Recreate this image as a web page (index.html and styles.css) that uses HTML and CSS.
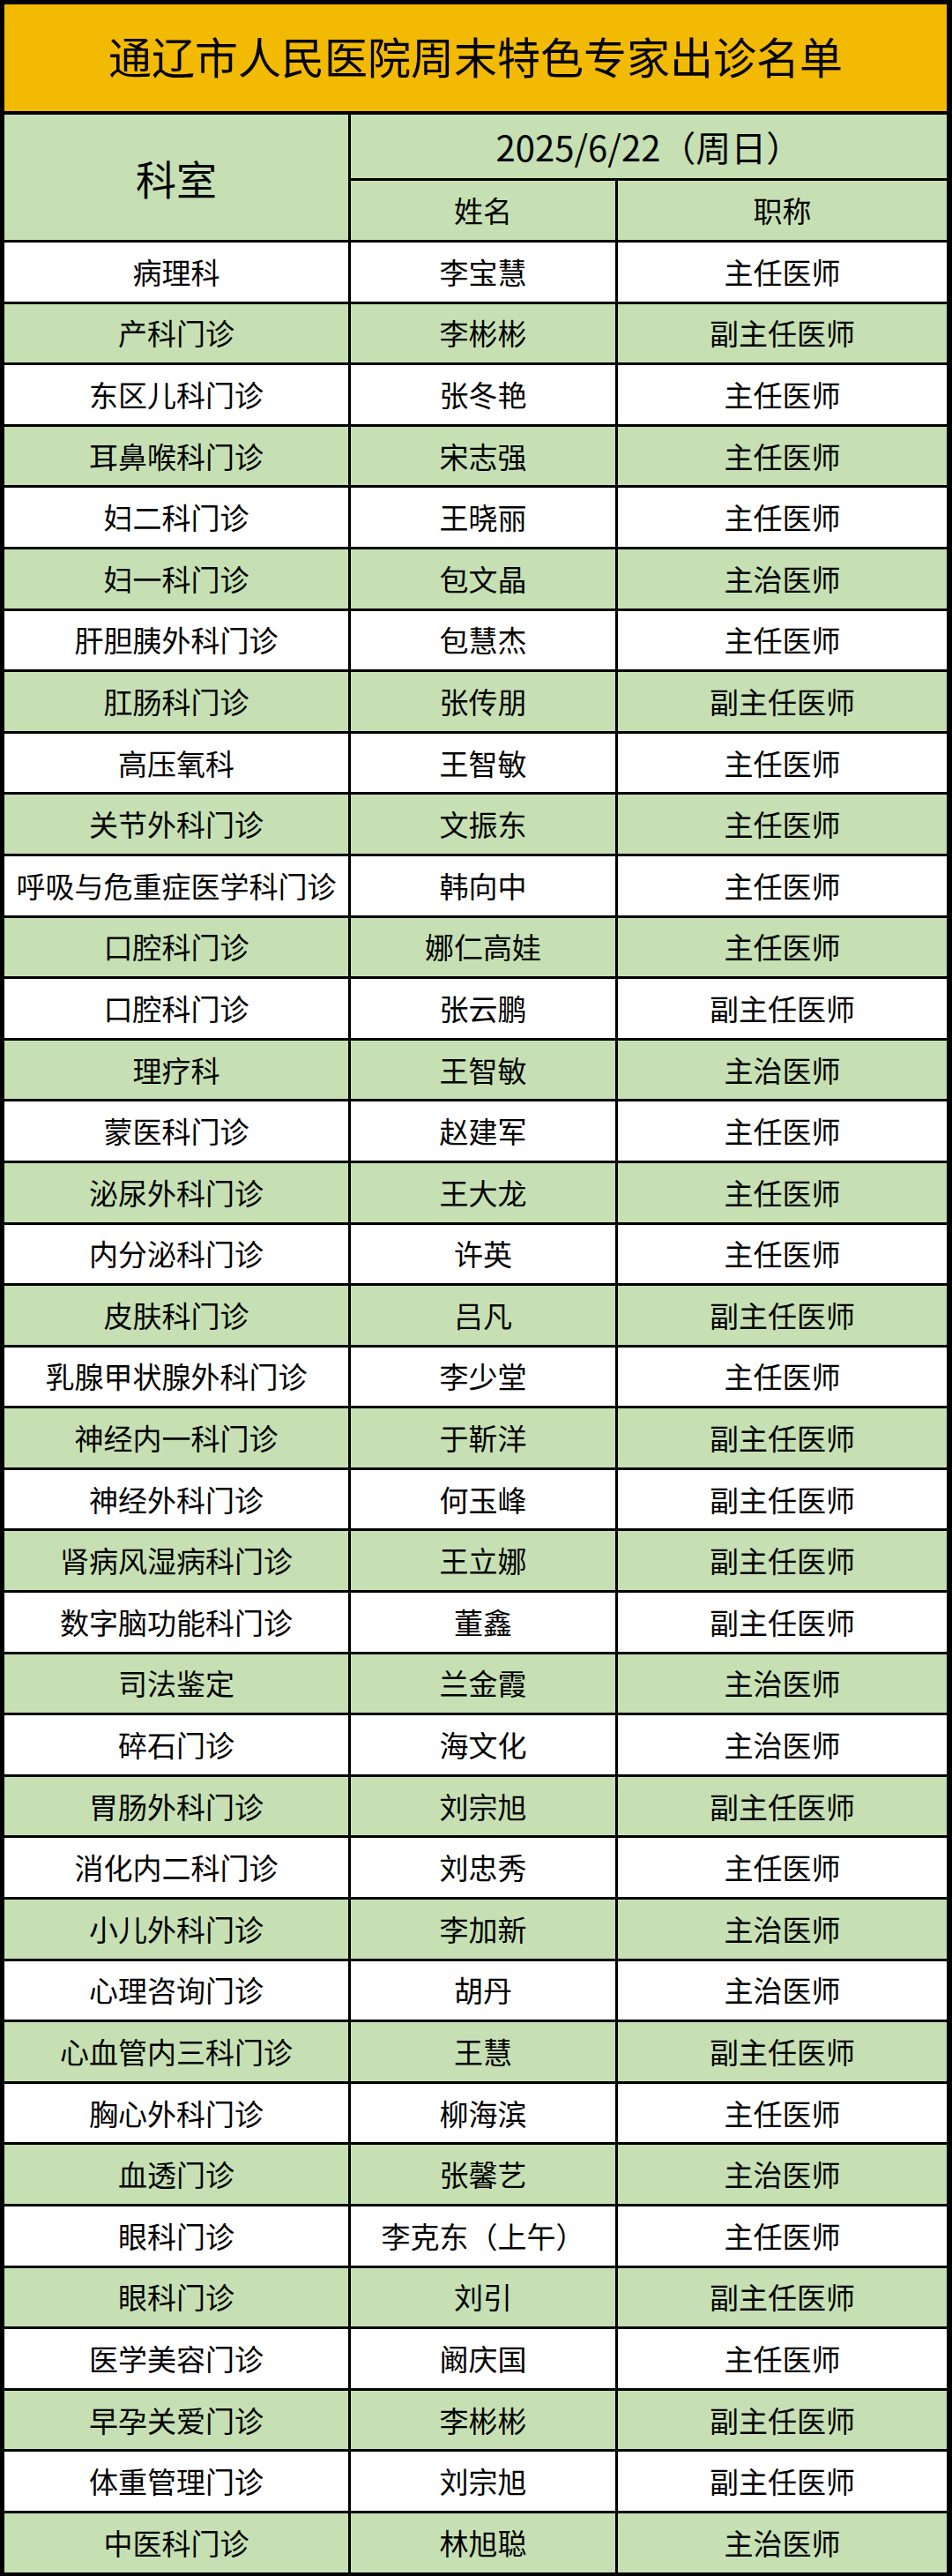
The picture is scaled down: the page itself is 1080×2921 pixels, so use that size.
FILE: index.html
```html
<!DOCTYPE html>
<html lang="zh-CN">
<head>
<meta charset="utf-8">
<title>通辽市人民医院周末特色专家出诊名单</title>
<link rel="stylesheet" href="styles.css">
</head>
<body>
<div class="sheet">
  <div class="title">通辽市人民医院周末特色专家出诊名单</div>
  <div class="grid">
    <div class="cell head dept">科室</div>
    <div class="cell head date">2025/6/22（周日）</div>
    <div class="cell head">姓名</div>
    <div class="cell head">职称</div>
    <div class="row w"><div class="cell">病理科</div><div class="cell">李宝慧</div><div class="cell">主任医师</div></div>
    <div class="row g"><div class="cell">产科门诊</div><div class="cell">李彬彬</div><div class="cell">副主任医师</div></div>
    <div class="row w"><div class="cell">东区儿科门诊</div><div class="cell">张冬艳</div><div class="cell">主任医师</div></div>
    <div class="row g"><div class="cell">耳鼻喉科门诊</div><div class="cell">宋志强</div><div class="cell">主任医师</div></div>
    <div class="row w"><div class="cell">妇二科门诊</div><div class="cell">王晓丽</div><div class="cell">主任医师</div></div>
    <div class="row g"><div class="cell">妇一科门诊</div><div class="cell">包文晶</div><div class="cell">主治医师</div></div>
    <div class="row w"><div class="cell">肝胆胰外科门诊</div><div class="cell">包慧杰</div><div class="cell">主任医师</div></div>
    <div class="row g"><div class="cell">肛肠科门诊</div><div class="cell">张传朋</div><div class="cell">副主任医师</div></div>
    <div class="row w"><div class="cell">高压氧科</div><div class="cell">王智敏</div><div class="cell">主任医师</div></div>
    <div class="row g"><div class="cell">关节外科门诊</div><div class="cell">文振东</div><div class="cell">主任医师</div></div>
    <div class="row w"><div class="cell">呼吸与危重症医学科门诊</div><div class="cell">韩向中</div><div class="cell">主任医师</div></div>
    <div class="row g"><div class="cell">口腔科门诊</div><div class="cell">娜仁高娃</div><div class="cell">主任医师</div></div>
    <div class="row w"><div class="cell">口腔科门诊</div><div class="cell">张云鹏</div><div class="cell">副主任医师</div></div>
    <div class="row g"><div class="cell">理疗科</div><div class="cell">王智敏</div><div class="cell">主治医师</div></div>
    <div class="row w"><div class="cell">蒙医科门诊</div><div class="cell">赵建军</div><div class="cell">主任医师</div></div>
    <div class="row g"><div class="cell">泌尿外科门诊</div><div class="cell">王大龙</div><div class="cell">主任医师</div></div>
    <div class="row w"><div class="cell">内分泌科门诊</div><div class="cell">许英</div><div class="cell">主任医师</div></div>
    <div class="row g"><div class="cell">皮肤科门诊</div><div class="cell">吕凡</div><div class="cell">副主任医师</div></div>
    <div class="row w"><div class="cell">乳腺甲状腺外科门诊</div><div class="cell">李少堂</div><div class="cell">主任医师</div></div>
    <div class="row g"><div class="cell">神经内一科门诊</div><div class="cell">于靳洋</div><div class="cell">副主任医师</div></div>
    <div class="row w"><div class="cell">神经外科门诊</div><div class="cell">何玉峰</div><div class="cell">副主任医师</div></div>
    <div class="row g"><div class="cell">肾病风湿病科门诊</div><div class="cell">王立娜</div><div class="cell">副主任医师</div></div>
    <div class="row w"><div class="cell">数字脑功能科门诊</div><div class="cell">董鑫</div><div class="cell">副主任医师</div></div>
    <div class="row g"><div class="cell">司法鉴定</div><div class="cell">兰金霞</div><div class="cell">主治医师</div></div>
    <div class="row w"><div class="cell">碎石门诊</div><div class="cell">海文化</div><div class="cell">主治医师</div></div>
    <div class="row g"><div class="cell">胃肠外科门诊</div><div class="cell">刘宗旭</div><div class="cell">副主任医师</div></div>
    <div class="row w"><div class="cell">消化内二科门诊</div><div class="cell">刘忠秀</div><div class="cell">主任医师</div></div>
    <div class="row g"><div class="cell">小儿外科门诊</div><div class="cell">李加新</div><div class="cell">主治医师</div></div>
    <div class="row w"><div class="cell">心理咨询门诊</div><div class="cell">胡丹</div><div class="cell">主治医师</div></div>
    <div class="row g"><div class="cell">心血管内三科门诊</div><div class="cell">王慧</div><div class="cell">副主任医师</div></div>
    <div class="row w"><div class="cell">胸心外科门诊</div><div class="cell">柳海滨</div><div class="cell">主任医师</div></div>
    <div class="row g"><div class="cell">血透门诊</div><div class="cell">张馨艺</div><div class="cell">主治医师</div></div>
    <div class="row w"><div class="cell">眼科门诊</div><div class="cell">李克东（上午）</div><div class="cell">主任医师</div></div>
    <div class="row g"><div class="cell">眼科门诊</div><div class="cell">刘引</div><div class="cell">副主任医师</div></div>
    <div class="row w"><div class="cell">医学美容门诊</div><div class="cell">阚庆国</div><div class="cell">主任医师</div></div>
    <div class="row g"><div class="cell">早孕关爱门诊</div><div class="cell">李彬彬</div><div class="cell">副主任医师</div></div>
    <div class="row w"><div class="cell">体重管理门诊</div><div class="cell">刘宗旭</div><div class="cell">副主任医师</div></div>
    <div class="row g"><div class="cell">中医科门诊</div><div class="cell">林旭聪</div><div class="cell">主治医师</div></div>
  </div>
</div>
</body>
</html>
```
FILE: styles.css
```css
html, body {
  margin: 0;
  padding: 0;
  background: #000;
}

body {
  width: 1080px;
  height: 2921px;
  font-family: "Noto Sans CJK SC", "Microsoft YaHei", sans-serif;
  color: #000;
}

.sheet {
  box-sizing: border-box;
  width: 1080px;
  height: 2921px;
  background: #000;
  padding: 5px 6px 4px 5px;
  display: flex;
  flex-direction: column;
  gap: 4px;
}

.title {
  box-sizing: border-box;
  height: 121px;
  padding-bottom: 6px;
  background: #F2BA02;
  display: flex;
  align-items: center;
  justify-content: center;
  font-size: 49px;
  line-height: 1;
  white-space: nowrap;
}

.grid {
  display: grid;
  grid-template-columns: 390px 300px 373px;
  grid-template-rows: 72px 67px repeat(38, 66.6px);
  gap: 3px;
}

.row {
  display: contents;
}

.cell {
  display: flex;
  align-items: center;
  justify-content: center;
  font-size: 33px;
  line-height: 1;
  white-space: nowrap;
}

.head {
  background: #C6E0B4;
}

.dept {
  grid-row: 1 / span 2;
  font-size: 46px;
}

.date {
  grid-column: 2 / span 2;
  font-size: 40px;
}

.row.w .cell {
  background: #FFFFFF;
}

.row.g .cell {
  background: #C6E0B4;
}
```
